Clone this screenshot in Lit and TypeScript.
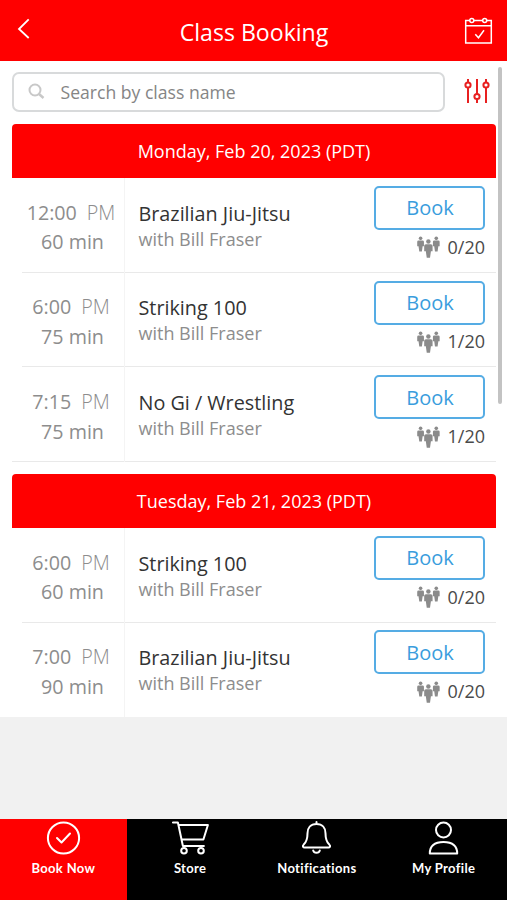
import { LitElement, html, css, svg } from "lit";
import { customElement, property } from "lit/decorators.js";

interface Lesson { time: string; mins: number; name: string; taken: number; }
interface Day { label: string; lessons: Lesson[]; }

const days: Day[] = [
  { label: "Monday, Feb 20, 2023 (PDT)", lessons: [
    { time: "12:00", mins: 60, name: "Brazilian Jiu-Jitsu", taken: 0 },
    { time: "6:00", mins: 75, name: "Striking 100", taken: 1 },
    { time: "7:15", mins: 75, name: "No Gi / Wrestling", taken: 1 },
  ] },
  { label: "Tuesday, Feb 21, 2023 (PDT)", lessons: [
    { time: "6:00", mins: 60, name: "Striking 100", taken: 0 },
    { time: "7:00", mins: 90, name: "Brazilian Jiu-Jitsu", taken: 0 },
  ] },
];

const person = (x: number, y: number, s: number) => svg`
  <g transform="translate(${x} ${y}) scale(${s})">
    <circle cx="4" cy="2" r="2.2"/>
    <path d="M1.600 4.700h4.800q1.700 0 1.700 1.500v5.300H6.500L5.600 18H2.400l-.9-6.500H-.1V6.200q0-1.500 1.700-1.500z"/>
  </g>`;

@customElement("class-row")
class ClassRow extends LitElement {
  @property({ attribute: false }) lesson!: Lesson;

  static styles = css`
    :host { display: flex; height: 94.700px; color: #8d8d8d; }
    .when { width: 113px; box-sizing: border-box; border-right: 1px solid #f4f4f4; text-align: center; font-size: 19.700px; line-height: 29.500px; padding: 19.700px 0 0 9px; white-space: pre; }
    .time { margin-left: -3px; }
    .pm { font-weight: 300; margin-left: 10px; }
    .what { flex: 1; padding: 22.800px 0 0 13.500px; font-size: 18px; line-height: 24px; white-space: nowrap; }
    .name { color: #333; font-size: 19.800px; line-height: 26px; }
    .side { width: 111px; margin-right: 11px; padding-top: 7.900px; }
    .book { display: block; width: 111px; height: 44px; box-sizing: border-box; border: 2px solid #55ace4; border-radius: 5px; background: #fff; color: #3a9ddd; font: 20px "Open Sans", sans-serif; padding: 0 0 0 1px; }
    .seats { display: flex; justify-content: flex-end; align-items: center; gap: 8px; height: 33.600px; color: #4a4a4a; font-size: 18px; }
    .seats svg { width: 23px; height: 23px; fill: #8b8b8b; margin-top: 2px; }
  `;

  render() {
    const l = this.lesson;
    return html`
      <div class="when"><div class="time">${l.time}<span class="pm">PM</span></div><div>${l.mins} min</div></div>
      <div class="what"><div class="name">${l.name}</div><div>with Bill Fraser</div></div>
      <div class="side">
        <button class="book">Book</button>
        <div class="seats">
          <svg viewBox="0 0 23 23">${person(0.3, 0.7, 0.82)}${person(7.3, 3.5, 1.02)}${person(16, 0.7, 0.82)}</svg>
          <span>${l.taken}/20</span>
        </div>
      </div>`;
  }
}

const tabs = [
  { label: "Book Now", icon: svg`<circle cx="18.500" cy="18" r="15.600"/><path d="m12 18 4.500 4.500 8.500-9"/>` },
  { label: "Store", icon: svg`<path d="M.9 2.500h5l5 23.500h21M6.900 5h29l-4.500 14.500H9.900"/><circle cx="12" cy="30.800" r="2.800"/><circle cx="29" cy="30.800" r="2.800"/>` },
  { label: "Notifications", icon: svg`<path d="M18.500 2v2M18.500 4c-6 0-9 4.200-9 9.300 0 6-1 8.700-3.800 11.300-1.600 1.600-.7 3 1 3h23.600c1.700 0 2.600-1.400 1-3-2.800-2.600-3.800-5.300-3.800-11.300 0-5.100-3-9.300-9-9.300zM15.200 30.500a3.400 3 0 0 0 6.600 0"/>` },
  { label: "My Profile", icon: svg`<circle cx="18.500" cy="10" r="7.500"/><path d="M4.800 33.500c0-7.500 5-11.500 13.700-11.500s13.700 4 13.700 11.500z"/>` },
];

@customElement("app-root")
class AppRoot extends LitElement {
  static styles = css`
    :host { display: flex; flex-direction: column; height: 900px; background: #f1f1f1; font-family: "Open Sans", sans-serif; overflow: hidden; }
    svg { display: block; flex: none; }
    .top { height: 61.400px; flex: none; background: #f00; color: #fff; display: flex; justify-content: space-between; padding: 0 14px 0 17px; }
    .top svg { fill: none; stroke: #fff; }
    .back { width: 13px; height: 22px; margin-top: 18px; }
    .cal { width: 29px; height: 29px; margin-top: 16px; }
    h1 { margin: 0 0 0 14px; font-size: 23.100px; font-weight: 400; line-height: 64px; }
    .body { background: #fff; height: 655.500px; flex: none; padding: 0 11px 0 12px; position: relative; box-sizing: border-box; overflow: hidden; }
    .tools { display: flex; height: 62.300px; padding-top: 10.500px; box-sizing: border-box; }
    .search { width: 433px; height: 40px; box-sizing: border-box; border: 2px solid #d8dadb; border-radius: 7px; display: flex; align-items: center; gap: 15.500px; padding-left: 14px; font-size: 17.600px; color: #858585; }
    .search svg { width: 17px; height: 17px; fill: none; stroke: #c8c8c8; stroke-width: 2; }
    .filter { width: 26px; height: 26px; margin: 6px 0 0 19px; fill: #fff; stroke: #e82020; stroke-width: 2; }
    .thumb { position: absolute; right: 5px; top: 5.500px; width: 4px; height: 337px; background: #c3c3c3; border-radius: 2px; }
    .day { margin-bottom: 11.500px; }
    h2 { margin: 0; height: 54.300px; line-height: 55px; background: #f00; color: #fff; border-radius: 4px 4px 0 0; font-size: 18px; font-weight: 400; text-align: center; }
    .line { height: 1px; margin: -1px 0 0 10px; background: #e9e9e9; }
    .line:last-child { margin-left: 0; }
    .day:last-of-type .line:last-child { background: none; }
    .tabs { margin-top: auto; height: 81px; display: flex; background: #000; color: #fff; }
    .tab { flex: 1; display: flex; flex-direction: column; align-items: center; font: 700 13px/18px Lato, sans-serif; letter-spacing: .35px; }
    .tab.on { background: #f00; }
    .tab svg { width: 37px; height: 36px; margin: 1px 0 3px; fill: none; stroke: #fff; stroke-width: 2; stroke-linecap: round; stroke-linejoin: round; }
  `;

  render() {
    return html`
      <header class="top">
        <svg class="back" viewBox="0 0 13 22"><path d="M11.700 1.300 2 11l9.700 9" stroke-width="1.800"/></svg>
        <h1>Class Booking</h1>
        <svg class="cal" viewBox="0 0 29 29"><path d="M6 4.500H1.700V27h25.600V4.500H22M9 4.500h10M1.700 9.800h25.600M11.300 18.300l3.200 3.500 5.500-7.500" stroke-width="1.500"/><circle cx="7.800" cy="4.500" r="2" stroke-width="1.500"/><circle cx="20.700" cy="4.500" r="2" stroke-width="1.500"/></svg>
      </header>
      <main class="body">
        <div class="tools">
          <div class="search"><svg viewBox="0 0 17 17"><circle cx="7" cy="7" r="5.500"/><path d="m11 11 4.500 4" stroke-width="2.500"/></svg><span>Search by class name</span></div>
          <svg class="filter" viewBox="0 0 26 26"><path d="M4 1v24M13 1v24M22 1v24"/><circle cx="4" cy="7" r="2.600"/><circle cx="13" cy="18.500" r="2.600"/><circle cx="22" cy="7" r="2.600"/></svg>
        </div>
        ${days.map(d => html`<section class="day"><h2>${d.label}</h2>${d.lessons.map(l => html`<class-row .lesson=${l}></class-row><div class="line"></div>`)}</section>`)}
        <div class="thumb"></div>
      </main>
      <nav class="tabs">${tabs.map((t, i) => html`<div class="tab ${i ? "" : "on"}"><svg viewBox="0 0 37 36">${t.icon}</svg>${t.label}</div>`)}</nav>`;
  }
}
